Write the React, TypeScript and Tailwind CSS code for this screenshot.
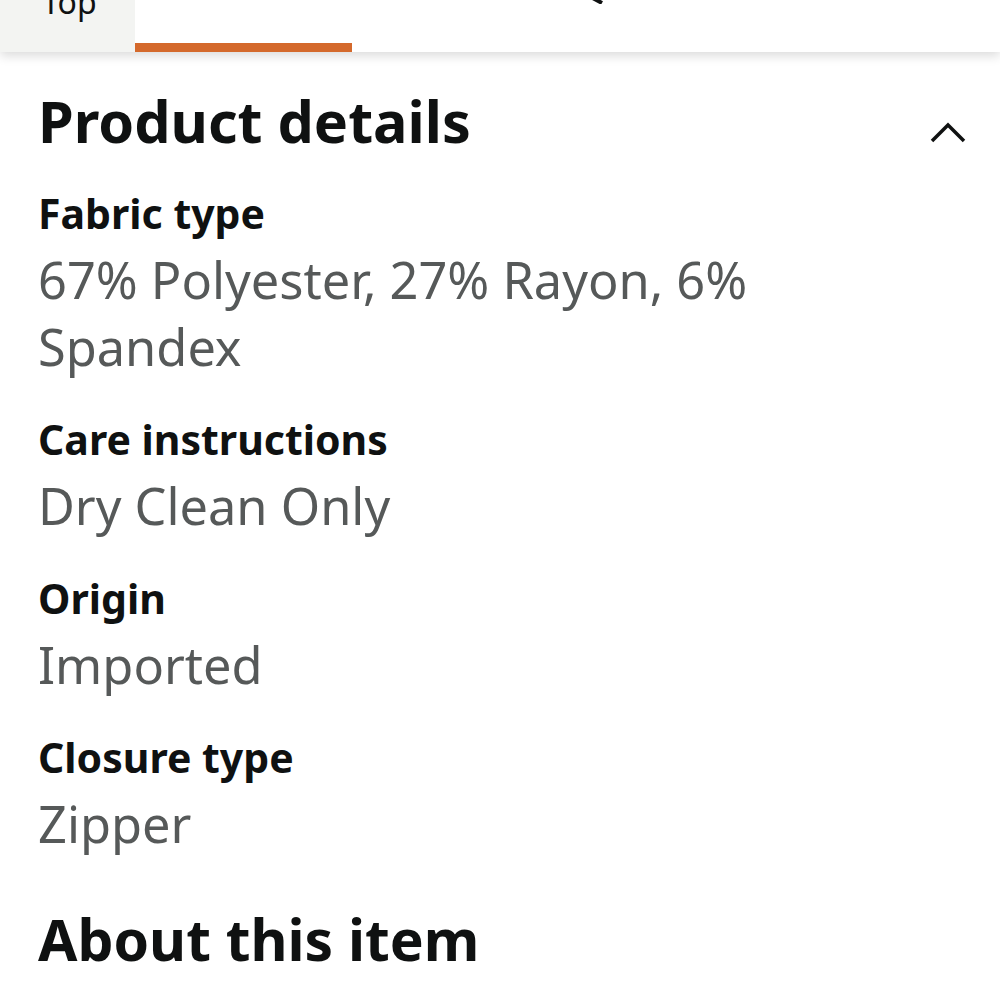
const details = [
  { label: 'Fabric type', value: '67% Polyester, 27% Rayon, 6% Spandex' },
  { label: 'Care instructions', value: 'Dry Clean Only' },
  { label: 'Origin', value: 'Imported' },
  { label: 'Closure type', value: 'Zipper' },
];

const App = () => {
  return (
    <div className="min-h-screen bg-white font-['Noto_Sans',sans-serif] text-[#0f1111]">
      {/* Sticky tab bar, scrolled so only its bottom shows */}
      <header className="relative z-10 flex h-[52px] overflow-hidden bg-white shadow-[0_4px_10px_rgba(0,0,0,0.14)]">
        <div className="w-[135px] bg-[#f3f4f2] pl-[42px]">
          <span className="mt-[-14px] block text-[32px] leading-[32px]">Top</span>
        </div>
        <div className="flex w-[217px] flex-col justify-end">
          <div className="h-[9px] bg-[#d4692c]" />
        </div>
        <div className="relative flex-1">
          <svg
            className="absolute left-[232px] top-[-8px]"
            width="22"
            height="12"
            viewBox="0 0 22 12"
            aria-hidden="true">
            <path d="M3 3 L18 11" stroke="#0f1111" strokeWidth="4" fill="none" />
          </svg>
        </div>
      </header>

      <main className="px-[38px]">
        <section className="pt-[35px]">
          <div className="flex items-start justify-between">
            <h2 className="text-[57.5px] font-bold leading-[68px]">Product details</h2>
            <button type="button" className="mr-[-6px] mt-[35px]" aria-label="Collapse">
              <svg width="40" height="24" viewBox="0 0 40 24" aria-hidden="true">
                <path
                  d="M4 19 L20 3 L36 19"
                  stroke="#0f1111"
                  strokeWidth="3.5"
                  fill="none"
                  strokeLinejoin="miter"
                />
              </svg>
            </button>
          </div>

          <dl className="mt-[34px] flex flex-col gap-[35px]">
            {details.map((item) => (
              <div key={item.label}>
                <dt className="text-[41px] font-bold leading-[48px]">{item.label}</dt>
                <dd className="mt-[9px] max-w-[800px] text-[50.5px] leading-[67px] text-[#565959]">
                  {item.value}
                </dd>
              </div>
            ))}
          </dl>
        </section>

        <h2 className="mt-[48px] text-[57px] font-bold leading-[68px]">About this item</h2>
      </main>
    </div>
  );
};

export default App;
